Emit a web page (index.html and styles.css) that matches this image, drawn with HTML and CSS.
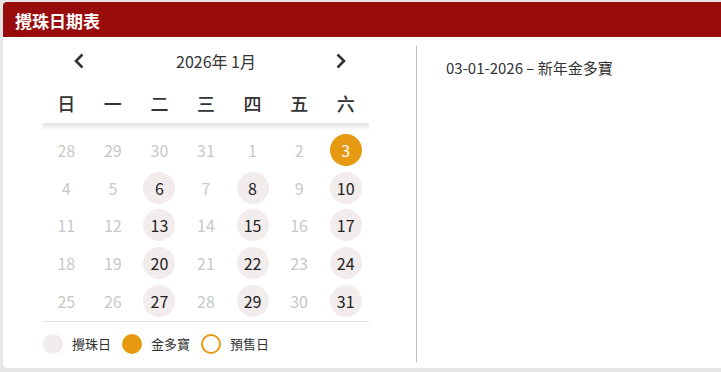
FILE: index.html
```html
<!DOCTYPE html>
<html lang="zh-Hant">
<head>
<meta charset="utf-8">
<title>攪珠日期表</title>
<link rel="stylesheet" href="styles.css">
</head>
<body>
<div class="card">
  <div class="card-header">攪珠日期表</div>
  <div class="card-body">
    <div class="calendar">
      <div class="nav">
        <span class="arrow">
          <svg width="12" height="16" viewBox="0 0 12 16"><path d="M9.5 1.5 L3 8 L9.5 14.5" fill="none" stroke="#333" stroke-width="2.6"/></svg>
        </span>
        <span class="month">2026年 1月</span>
        <span class="arrow">
          <svg width="12" height="16" viewBox="0 0 12 16"><path d="M2.5 1.5 L9 8 L2.5 14.5" fill="none" stroke="#333" stroke-width="2.6"/></svg>
        </span>
      </div>
      <div class="weekdays">
        <span>日</span><span>一</span><span>二</span><span>三</span><span>四</span><span>五</span><span>六</span>
      </div>
      <div class="shade"></div>
      <div class="days">
        <span class="d muted">28</span><span class="d muted">29</span><span class="d muted">30</span><span class="d muted">31</span><span class="d muted">1</span><span class="d muted">2</span><span class="d jackpot">3</span>
        <span class="d muted">4</span><span class="d muted">5</span><span class="d draw">6</span><span class="d muted">7</span><span class="d draw">8</span><span class="d muted">9</span><span class="d draw">10</span>
        <span class="d muted">11</span><span class="d muted">12</span><span class="d draw">13</span><span class="d muted">14</span><span class="d draw">15</span><span class="d muted">16</span><span class="d draw">17</span>
        <span class="d muted">18</span><span class="d muted">19</span><span class="d draw">20</span><span class="d muted">21</span><span class="d draw">22</span><span class="d muted">23</span><span class="d draw">24</span>
        <span class="d muted">25</span><span class="d muted">26</span><span class="d draw">27</span><span class="d muted">28</span><span class="d draw">29</span><span class="d muted">30</span><span class="d draw">31</span>
      </div>
      <div class="legend">
        <span class="item"><span class="dot dot-draw"></span>攪珠日</span>
        <span class="item"><span class="dot dot-jackpot"></span>金多寶</span>
        <span class="item"><span class="dot dot-presale"></span>預售日</span>
      </div>
    </div>
    <div class="divider"></div>
    <div class="events">
      <div class="event">03-01-2026 – 新年金多寶</div>
    </div>
  </div>
</div>
</body>
</html>
```
FILE: styles.css
```css
html, body {
  margin: 0;
  padding: 0;
}
body {
  background: #e6e6e6;
  padding: 2px 0 0 3px;
  overflow: hidden;
  height: 372px;
  box-sizing: border-box;
  font-family: "Noto Sans CJK TC", "Noto Sans", sans-serif;
  color: #333;
}
.card {
  width: 740px;
  height: 366px;
  background: #fff;
  border-radius: 4px;
  overflow: hidden;
}
.card-header {
  height: 35px;
  background: #980c0c;
  color: #fff;
  font-size: 17px;
  font-weight: 700;
  display: flex;
  align-items: center;
  padding-left: 12px;
  padding-top: 1px;
  box-sizing: border-box;
}
.card-body {
  display: flex;
  height: 331px;
}
.calendar {
  width: 326px;
  margin-left: 40px;
  margin-right: 47px;
}
.nav {
  margin-top: 9px;
  height: 30px;
  display: flex;
  align-items: center;
  padding-left: 30px;
  padding-right: 22px;
}
.arrow {
  display: flex;
  width: 12px;
  height: 16px;
}
.month {
  flex: 1;
  text-align: center;
  font-size: 16px;
  padding-left: 12px;
  color: #333;
}
.weekdays {
  margin-top: 7px;
  height: 40px;
  display: grid;
  grid-template-columns: repeat(7, 1fr);
  align-items: center;
  justify-items: center;
  font-size: 18px;
  font-weight: 500;
  color: #333;
}
.shade {
  height: 8px;
  background: linear-gradient(#e2e2e2, #fff);
}
.days {
  display: grid;
  grid-template-columns: repeat(7, 1fr);
  grid-auto-rows: 37.75px;
  align-items: center;
  justify-items: center;
  border-bottom: 1px solid #e0e0e0;
  padding-bottom: 1px;
}
.d {
  width: 32px;
  height: 32px;
  border-radius: 50%;
  display: flex;
  align-items: center;
  justify-content: center;
  font-size: 16px;
}
.muted {
  color: #c8c8c8;
}
.draw {
  background: #f2ecec;
  color: #222;
}
.jackpot {
  background: #e69a12;
  color: #fff;
}
.legend {
  display: flex;
  align-items: center;
  padding-top: 12px;
  font-size: 13px;
  color: #333;
  gap: 11px;
}
.item {
  display: flex;
  align-items: center;
  gap: 9px;
}
.dot {
  width: 20px;
  height: 20px;
  border-radius: 50%;
  box-sizing: border-box;
}
.dot-draw {
  background: #f2ecec;
}
.dot-jackpot {
  background: #e69a12;
}
.dot-presale {
  border: 2px solid #e69a12;
  background: #fff;
}
.divider {
  width: 1px;
  background: #bdbdbd;
  margin-top: 9px;
  margin-bottom: 6px;
}
.events {
  padding-left: 29px;
  padding-top: 21px;
}
.event {
  font-size: 15px;
  line-height: 20px;
  color: #333;
}
```
